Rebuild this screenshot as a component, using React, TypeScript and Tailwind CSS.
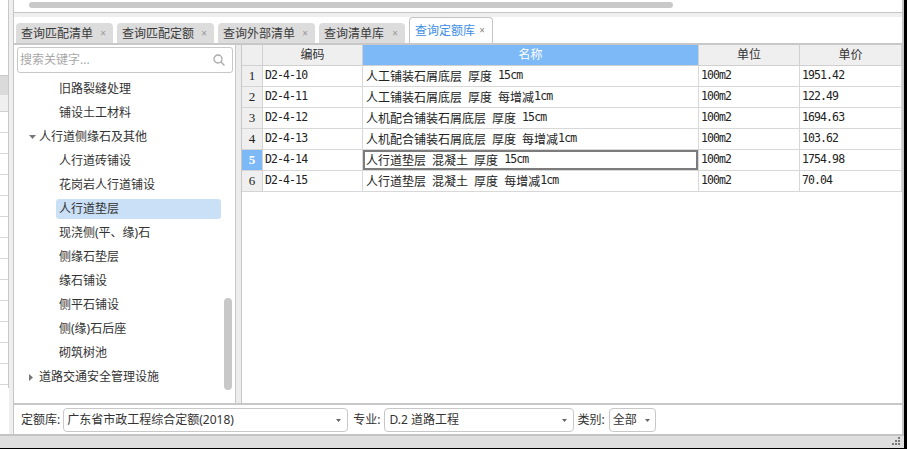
import React from "react";

const TABS = [
  { label: "查询匹配清单", w: "w-[97px]" },
  { label: "查询匹配定额", w: "w-[97px]" },
  { label: "查询外部清单", w: "w-[97px]" },
  { label: "查询清单库", w: "w-[86px]" },
];

const TREE = [
  { t: "旧路裂缝处理", l: 2 },
  { t: "铺设土工材料", l: 2 },
  { t: "人行道侧缘石及其他", l: 1, open: true },
  { t: "人行道砖铺设", l: 2 },
  { t: "花岗岩人行道铺设", l: 2 },
  { t: "人行道垫层", l: 2, sel: true },
  { t: "现浇侧(平、缘)石", l: 2 },
  { t: "侧缘石垫层", l: 2 },
  { t: "缘石铺设", l: 2 },
  { t: "侧平石铺设", l: 2 },
  { t: "侧(缘)石后座", l: 2 },
  { t: "砌筑树池", l: 2 },
  { t: "道路交通安全管理设施", l: 1, open: false },
];

const ROWS = [
  ["D2-4-10", "人工铺装石屑底层 厚度 15cm", "100m2", "1951.42"],
  ["D2-4-11", "人工铺装石屑底层 厚度 每增减1cm", "100m2", "122.49"],
  ["D2-4-12", "人机配合铺装石屑底层 厚度 15cm", "100m2", "1694.63"],
  ["D2-4-13", "人机配合铺装石屑底层 厚度 每增减1cm", "100m2", "103.62"],
  ["D2-4-14", "人行道垫层 混凝土 厚度 15cm", "100m2", "1754.98"],
  ["D2-4-15", "人行道垫层 混凝土 厚度 每增减1cm", "100m2", "70.04"],
];

// ascii runs in a narrow mono, chinese in the cjk face
const Mixed = ({ text }: { text: string }) => {
  const parts = text.split(/([\x20-\x7e]+)/).filter(Boolean);
  return (
    <>
      {parts.map((p, i) =>
        /^[\x20-\x7e]+$/.test(p) ? (
          <span key={i} className="whitespace-pre font-['DejaVu_Sans_Mono',monospace] text-[11.5px] tracking-[-0.9px]">
            {p}
          </span>
        ) : (
          <span key={i} className="font-['Noto_Sans_CJK_SC',sans-serif] text-[12px]">
            {p}
          </span>
        )
      )}
    </>
  );
};

const Caret = ({ open }: { open: boolean }) =>
  open ? (
    <svg width="7" height="4" viewBox="0 0 7 4">
      <path d="M0 0h7L3.5 4z" fill="#777" />
    </svg>
  ) : (
    <svg width="4" height="7" viewBox="0 0 4 7">
      <path d="M0 0v7l4-3.5z" fill="#777" />
    </svg>
  );

const SelectCaret = () => (
  <svg width="5" height="3" viewBox="0 0 5 3">
    <path d="M0 0h5L2.5 3z" fill="#666" />
  </svg>
);

const BackWindow = () => (
  <div className="flex w-[9px] flex-col bg-white">
    <div className="flex h-[388px] flex-col border-r border-[#c8c8c8]">
      <div className="h-[76px] border-b border-[#c8c8c8]" />
      <div className="h-[19px] bg-[#dadada]" />
      <div className="h-[17px] border-b border-[#d0d0d0] bg-[#efefef]" />
      {Array.from({ length: 13 }).map((_, i) => (
        <div key={i} className="h-[21px] border-b border-[#d8d8d8]" />
      ))}
    </div>
  </div>
);

const TabStrip = () => (
  <div className="flex h-[26px] items-end gap-[4px] bg-white pl-[2px]">
    {TABS.map((tab) => (
      <div
        key={tab.label}
        className={`flex h-[20px] ${tab.w} items-center justify-between rounded-t-[4px] bg-[#dcdcdc] pl-[5px] pr-[7px] pt-[1px] text-[#3a3a3a]`}
      >
        <span className="leading-[20px]">{tab.label}</span>
        <span className="text-[10px] text-[#999]">×</span>
      </div>
    ))}
    <div className="flex h-[26px] w-[84px] items-center justify-between rounded-t-[4px] border border-b-0 border-[#c4c4c4] bg-white pl-[5px] pr-[7px] text-[#3d8ee6]">
      <span className="leading-[20px]">查询定额库</span>
      <span className="text-[10px] text-[#888]">×</span>
    </div>
  </div>
);

const TreePanel = () => (
  <div className="flex w-[222px] flex-col border-r border-[#c8c8c8] bg-white">
    <div className="ml-[3px] mr-[2px] mt-[2px] flex h-[26px] items-center justify-between rounded-[3px] border border-[#c8c8c8] pl-[2px] pr-[7px]">
      <span className="text-[#a8a8a8]">搜索关键字...</span>
      <svg width="12" height="12" viewBox="0 0 12 12">
        <circle cx="5" cy="5" r="4" fill="none" stroke="#aaa" strokeWidth="1.3" />
        <path d="M8 8l3 3" stroke="#aaa" strokeWidth="1.4" strokeLinecap="round" />
      </svg>
    </div>
    <div className="relative mt-[4px] flex-1">
      {TREE.map((n) =>
        n.l === 1 ? (
          <div key={n.t} className="flex h-[24px] items-center pl-[15px]">
            <span className="flex w-[10px] items-center">
              <Caret open={!!n.open} />
            </span>
            <span className="leading-[20px]">{n.t}</span>
          </div>
        ) : (
          <div key={n.t} className="flex h-[24px] items-center pl-[42px]">
            <span
              className={`flex h-[20px] w-[165px] items-center rounded-[3px] px-[3px] leading-[20px] ${n.sel ? "bg-[#cae0f7]" : ""}`}
            >
              {n.t}
            </span>
          </div>
        )
      )}
      {/* scrollbar thumb */}
      <div className="absolute left-[210px] top-[221px] h-[92px] w-[8px] rounded-full bg-[#c8c8c8]" />
    </div>
  </div>
);

const Grid = () => (
  <div className="w-[661px] border-l border-[#c8c8c8] bg-white">
    <div className="grid grid-cols-[21px_100px_336px_101px_102px]">
      <div className="h-[21px] border-b border-r border-[#d0d0d0] bg-[#efefef]" />
      <div className="flex h-[21px] items-center justify-center border-b border-r border-[#d0d0d0] bg-[#efefef]">编码</div>
      <div className="flex h-[21px] items-center justify-center border-b border-r border-[#d0d0d0] bg-[#7db9f6] text-white">名称</div>
      <div className="flex h-[21px] items-center justify-center border-b border-r border-[#d0d0d0] bg-[#efefef]">单位</div>
      <div className="flex h-[21px] items-center justify-center border-b border-r border-[#d0d0d0] bg-[#efefef]">单价</div>
      {ROWS.map((r, i) => {
        const sel = i === 4;
        return (
          <React.Fragment key={r[0]}>
            <div
              className={`flex h-[21px] items-center justify-center border-b border-r border-[#d4d4d4] font-['Liberation_Serif',serif] text-[13px] ${sel ? "bg-[#7db9f6] font-bold text-white" : "bg-[#efefef] text-[#222]"}`}
            >
              {i + 1}
            </div>
            <div className="flex h-[21px] items-center border-b border-r border-[#d8d8d8] pl-[2px] text-[#222]">
              <Mixed text={r[0]} />
            </div>
            <div
              className={`flex h-[21px] items-center border-b border-r border-[#d8d8d8] pl-[3px] text-[#222] ${sel ? "shadow-[inset_0_0_0_2px_#7c7c7c]" : ""}`}
            >
              <Mixed text={r[1]} />
            </div>
            <div className="flex h-[21px] items-center border-b border-r border-[#d8d8d8] pl-[2px] text-[#222]">
              <Mixed text={r[2]} />
            </div>
            <div className="flex h-[21px] items-center border-b border-r border-[#d8d8d8] pl-[2px] text-[#222]">
              <Mixed text={r[3]} />
            </div>
          </React.Fragment>
        );
      })}
    </div>
  </div>
);

const BottomBar = () => (
  <div className="flex h-[29px] items-start bg-white pl-[7px] pt-[3px]">
    <span className="flex h-[24px] items-center">定额库:</span>
    <div className="ml-[3px] flex h-[24px] w-[285px] items-center justify-between rounded-[4px] border border-[#c8c8c8] pl-[3px] pr-[6px]">
      <span>广东省市政工程综合定额(2018)</span>
      <SelectCaret />
    </div>
    <span className="ml-[5px] flex h-[24px] items-center">专业:</span>
    <div className="ml-[4px] flex h-[24px] w-[190px] items-center justify-between rounded-[4px] border border-[#c8c8c8] pl-[4px] pr-[6px]">
      <span>D.2 道路工程</span>
      <SelectCaret />
    </div>
    <span className="ml-[3px] flex h-[24px] items-center">类别:</span>
    <div className="ml-[4px] flex h-[24px] w-[47px] items-center justify-between rounded-[4px] border border-[#c8c8c8] pl-[3px] pr-[5px]">
      <span>全部</span>
      <SelectCaret />
    </div>
  </div>
);

const StatusBar = () => (
  <div className="flex h-[15px] justify-end border-b border-t-2 border-b-black border-t-[#c4c4c4] bg-[#dfdfdf] pr-[3px] pt-[1px]">
    <svg width="9" height="9" viewBox="0 0 9 9">
      {[
        [6, 0],
        [3, 3],
        [6, 3],
        [0, 6],
        [3, 6],
        [6, 6],
      ].map(([x, y]) => (
        <rect key={`${x}-${y}`} x={x} y={y} width="2" height="2" fill="#7a7a7a" />
      ))}
    </svg>
  </div>
);

export default function App() {
  return (
    <div className="flex h-[449px] w-[907px] overflow-hidden bg-[#efefef] font-['Noto_Sans','Noto_Sans_CJK_SC',sans-serif] text-[12px] text-[#333]">
      <div className="flex w-[904px] flex-col">
        <div className="flex h-[434px]">
          <BackWindow />
          <div className="w-[4px] bg-[#efefef]" />
          <div className="flex w-[891px] flex-col border-l border-r-2 border-[#c6c6c6] bg-[#efefef]">
            <div className="h-[13px] border-b border-[#c6c6c6] bg-white pl-[15px] pt-[2px]">
              <div className="h-[6px] w-[644px] rounded-full bg-[#c9c9c9]" />
            </div>
            <div className="h-[4px] bg-[#efefef]" />
            <TabStrip />
            <div className="h-[2px] bg-[#c8c8c8]" />
            <div className="flex h-[358px]">
              <TreePanel />
              <div className="w-[5px] bg-[#ececec]" />
              <Grid />
            </div>
            <div className="h-[2px] bg-[#c8c8c8]" />
            <BottomBar />
          </div>
        </div>
        <StatusBar />
      </div>
      <div className="w-[3px] bg-black" />
    </div>
  );
}
